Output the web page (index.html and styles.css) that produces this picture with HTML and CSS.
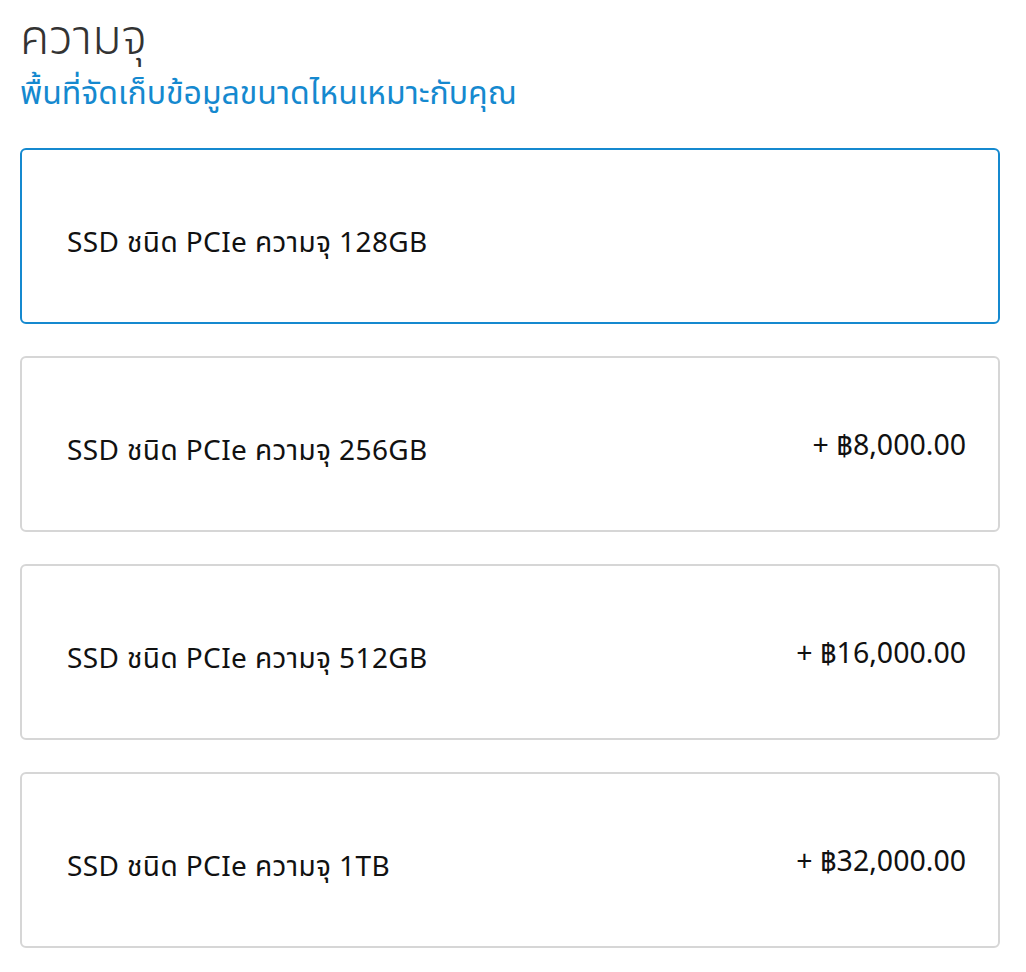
FILE: index.html
```html
<!DOCTYPE html>
<html lang="th">
<head>
<meta charset="utf-8">
<link rel="stylesheet" href="styles.css">
</head>
<body>
<div class="page">
  <header class="head">
    <h1 class="title">ความจุ</h1>
    <p class="subtitle">พื้นที่จัดเก็บข้อมูลขนาดไหนเหมาะกับคุณ</p>
  </header>
  <div class="options">
    <div class="option selected">
      <span class="name">SSD ชนิด PCIe ความจุ 128GB</span>
    </div>
    <div class="option">
      <span class="name">SSD ชนิด PCIe ความจุ 256GB</span>
      <span class="price">+ ฿8,000.00</span>
    </div>
    <div class="option">
      <span class="name">SSD ชนิด PCIe ความจุ 512GB</span>
      <span class="price">+ ฿16,000.00</span>
    </div>
    <div class="option">
      <span class="name">SSD ชนิด PCIe ความจุ 1TB</span>
      <span class="price">+ ฿32,000.00</span>
    </div>
  </div>
</div>
</body>
</html>
```

FILE: styles.css
```css
html, body {
  margin: 0;
  padding: 0;
  background: #fff;
}
body {
  font-family: "Noto Sans", "Noto Sans Thai", sans-serif;
  color: #111;
}
.page {
  padding: 10px 26px 0 20px;
}
.head {
  margin-bottom: 32px;
}
.title {
  margin: 0;
  font-family: "Noto Sans Thai", "Noto Sans", sans-serif;
  font-size: 48px;
  font-weight: 300;
  color: #333;
  line-height: 60px;
}
.subtitle {
  margin: 2px 0 0;
  font-family: "Noto Sans Thai", "Noto Sans", sans-serif;
  font-size: 32px;
  color: #1589cf;
  line-height: 44px;
}
.options {
  display: flex;
  flex-direction: column;
  gap: 32px;
}
.option {
  box-sizing: border-box;
  height: 176px;
  border: 2px solid #d6d6d6;
  border-radius: 6px;
  display: flex;
  align-items: center;
  justify-content: space-between;
  padding: 0 32px 0 45px;
}
.option.selected {
  border-color: #1589cf;
}
.name {
  font-size: 28px;
  letter-spacing: 0.4px;
  line-height: 34px;
  margin-top: 10px;
}
.price {
  font-size: 28.5px;
  line-height: 34px;
}
```
